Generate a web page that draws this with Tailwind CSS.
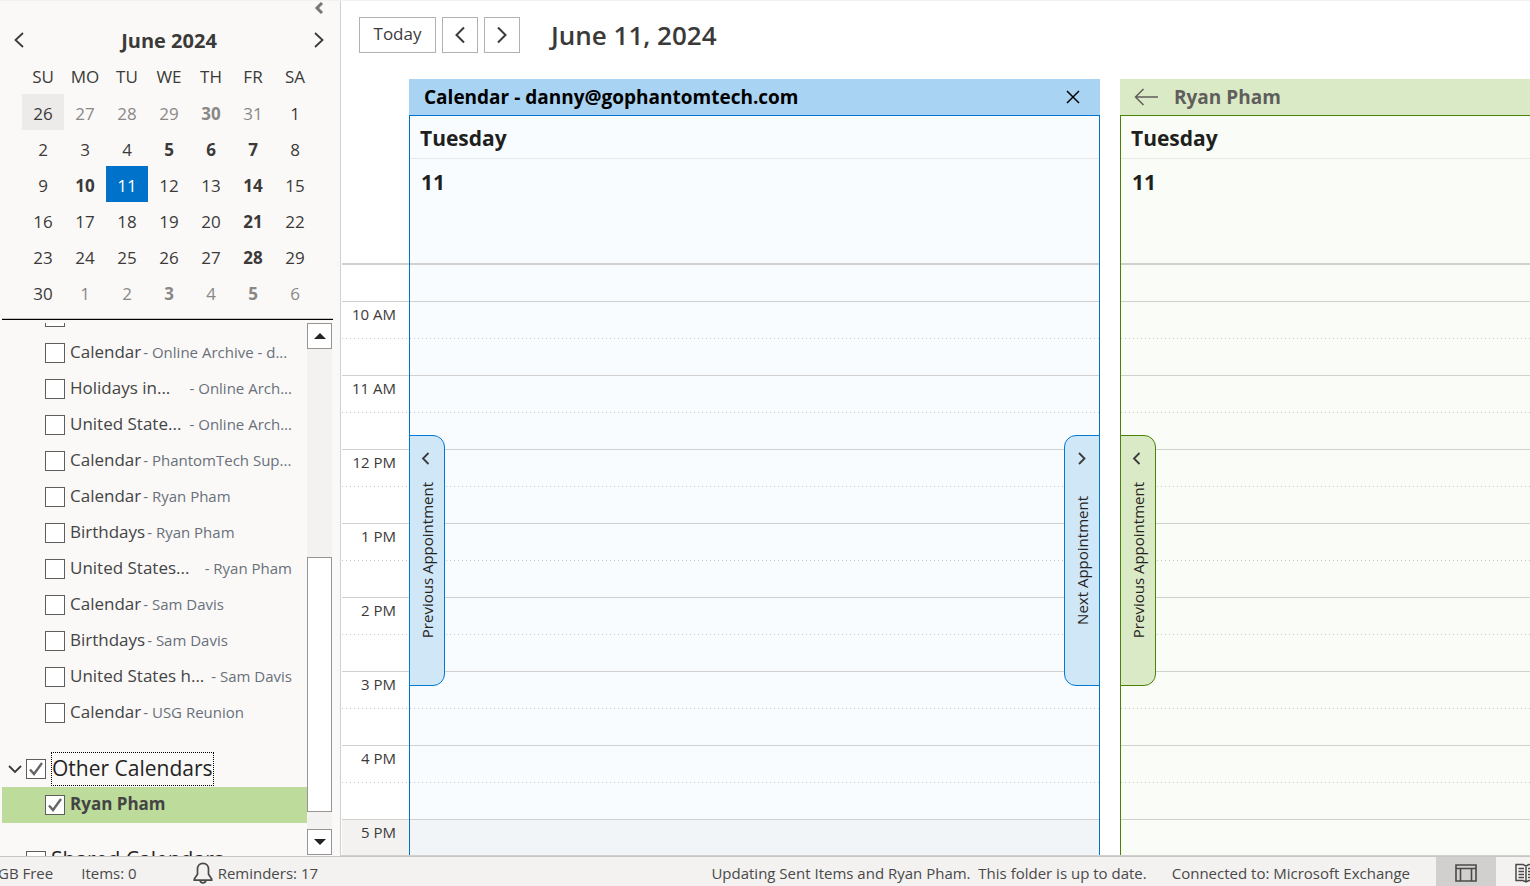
<!DOCTYPE html>
<html lang="en">
<head>
  <meta charset="UTF-8">
  <meta name="viewport" content="width=device-width, initial-scale=1.0">
  <title>Calendar - June 11, 2024</title>
  <script src="https://cdn.jsdelivr.net/npm/@tailwindcss/browser@4"></script>
  <style>
    body {
      font-family: 'Open Sans', 'Noto Sans', sans-serif;
    }
  </style>
</head>
<body class="flex flex-col h-screen overflow-hidden bg-white text-[#3b3a39]">
  <div class="flex-1 min-h-0 flex border-t border-[#f3f2f1]">

    <!-- Sidebar -->
    <aside class="w-[341px] shrink-0 flex flex-col bg-[#faf9f8] border-r border-[#d2d0ce]">
      <div class="flex justify-end h-[14px] pr-4">
        <button aria-label="Minimize folder pane" class="w-[10px]">
          <svg class="w-[10px] h-[12px]" viewBox="0 0 10 12" fill="none" stroke="#797775" stroke-width="3"><path d="M8 1 3 6l5 5"/></svg>
        </button>
      </div>

      <!-- Date navigator -->
      <div class="flex items-center justify-between h-[43px] pl-3 pr-[14px] pt-[6px]">
        <button aria-label="Previous month" class="p-px">
          <svg class="w-[12px] h-[18px]" viewBox="0 0 12 18" fill="none" stroke="#3b3a39" stroke-width="1.8"><path d="M10 2 2.500 9l7.500 7"/></svg>
        </button>
        <h2 class="text-[20px] leading-6 font-bold pt-[2px]">June 2024</h2>
        <button aria-label="Next month" class="p-px">
          <svg class="w-[12px] h-[18px]" viewBox="0 0 12 18" fill="none" stroke="#3b3a39" stroke-width="1.8"><path d="m2 2 7.500 7L2 16"/></svg>
        </button>
      </div>
      <table class="w-[294px] ml-[22px] table-fixed text-center text-[17px]">
        <thead>
          <tr class="h-9">
            <th class="font-normal p-0 pt-[2px]">SU</th>
            <th class="font-normal p-0 pt-[2px]">MO</th>
            <th class="font-normal p-0 pt-[2px]">TU</th>
            <th class="font-normal p-0 pt-[2px]">WE</th>
            <th class="font-normal p-0 pt-[2px]">TH</th>
            <th class="font-normal p-0 pt-[2px]">FR</th>
            <th class="font-normal p-0 pt-[2px]">SA</th>
          </tr>
        </thead>
        <tbody id="month-days"></tbody>
      </table>

      <!-- Calendar list -->
      <div class="mt-2 ml-[2px] mr-[7px] border-b border-black shadow-[inset_0_-1px_0_#c8c6c4] h-[2px]"></div>
      <div class="flex-1 min-h-0 flex mt-[3px] ml-[2px] mr-2">
        <div class="flex-1 min-w-0 overflow-hidden">
          <div id="calendar-list" class="-mt-[25px]"></div>
          <div class="flex items-center h-9 mt-[21px] pl-[5px]">
            <button aria-label="Collapse Other Calendars" class="w-[19px]">
              <svg class="w-4 h-4" viewBox="0 0 16 16" fill="none" stroke="#3b3a39" stroke-width="1.8"><path d="m2 5 6 6 6-6"/></svg>
            </button>
            <input type="checkbox" id="group-other" checked class="appearance-none size-5 bg-white border border-[#605e5c]">
            <svg class="size-5 -ml-5 pointer-events-none" viewBox="0 0 20 20" fill="none" stroke="#666" stroke-width="2.400"><path d="m4 10.500 4 4.500 8-11"/></svg>
            <label for="group-other" class="ml-[5px] h-[34px] leading-[30px] text-[21px] whitespace-nowrap text-[#252423] border border-dotted border-black">Other Calendars</label>
          </div>
          <div class="flex items-center h-9 pl-[43px] bg-[#bddb9a]">
            <input type="checkbox" id="cal-ryan" checked class="appearance-none size-5 bg-white border border-[#605e5c]">
            <svg class="size-5 -ml-5 pointer-events-none" viewBox="0 0 20 20" fill="none" stroke="#666" stroke-width="2.400"><path d="m4 10.500 4 4.500 8-11"/></svg>
            <label for="cal-ryan" class="ml-[5px] pb-[2px] text-[17px] font-bold text-[#444]">Ryan Pham</label>
          </div>
          <div class="flex items-center h-9 mt-5 pl-6">
            <input type="checkbox" id="group-shared" class="appearance-none size-5 bg-white border border-[#605e5c]">
            <label for="group-shared" class="ml-[5px] pb-[2px] text-[21px] whitespace-nowrap text-[#252423]">Shared Calendars</label>
          </div>
        </div>
        <!-- Scrollbar -->
        <div class="w-[25px] flex flex-col bg-[#f3f2f1] mb-px">
          <button aria-label="Scroll up" class="h-[26px] shrink-0 flex items-center justify-center bg-white border border-[#979593]">
            <svg class="w-3 h-[6px]" viewBox="0 0 12 6" fill="#252423"><path d="M0 6 6 0l6 6z"/></svg>
          </button>
          <div class="flex-[209]"></div>
          <div class="flex-[255] bg-white border border-[#979593]"></div>
          <div class="flex-[17]"></div>
          <button aria-label="Scroll down" class="h-[26px] shrink-0 flex items-center justify-center bg-white border border-[#979593]">
            <svg class="w-3 h-[6px]" viewBox="0 0 12 6" fill="#252423"><path d="m0 0 6 6 6-6z"/></svg>
          </button>
        </div>
      </div>
    </aside>

    <!-- Day view -->
    <main class="flex-1 min-w-0 flex flex-col pl-px border-b border-[#d2d0ce]">
      <div class="flex items-center gap-[6px] h-[68px] pl-[17px]">
        <button class="h-9 w-[77px] pb-[2px] border border-[#b3b0ad] text-[17px]">Today</button>
        <button aria-label="Previous day" class="size-9 flex items-center justify-center border border-[#b3b0ad]">
          <svg class="w-[12px] h-[18px]" viewBox="0 0 12 18" fill="none" stroke="#3b3a39" stroke-width="2"><path d="M10 1.500 2.500 9l7.500 7.500"/></svg>
        </button>
        <button aria-label="Next day" class="size-9 flex items-center justify-center border border-[#b3b0ad]">
          <svg class="w-[12px] h-[18px]" viewBox="0 0 12 18" fill="none" stroke="#3b3a39" stroke-width="2"><path d="m2 1.500 7.500 7.500L2 16.500"/></svg>
        </button>
        <h1 class="ml-[25px] text-[26px] leading-9 font-semibold">June 11, 2024</h1>
      </div>

      <div class="flex-1 min-h-0 flex mt-[10px]">
        <!-- Hours -->
        <div class="w-[67px] shrink-0 flex flex-col pt-[184px]">
          <div class="shrink-0 h-[38px] border-t-2 border-[#d2d0ce]"></div>
          <div id="hours" class="flex-1 min-h-0 overflow-hidden text-[15px] text-right"></div>
        </div>

        <div class="flex-1 min-w-0 grid grid-cols-[691fr_410fr] gap-5">
          <section class="min-w-0 min-h-0 flex flex-col">
            <header class="h-9 shrink-0 flex items-center justify-between pl-[15px] pr-5 bg-[#a9d3f2] text-black">
              <h2 class="text-[19px] font-bold">Calendar - danny@gophantomtech.com</h2>
              <button aria-label="Close calendar">
                <svg class="size-[14px]" viewBox="0 0 14 14" fill="none" stroke="#000" stroke-width="1.500"><path d="m1 1 12 12M13 1 1 13"/></svg>
              </button>
            </header>
            <div class="flex-1 min-h-0 flex flex-col border border-b-0 border-[#0072c9] bg-[#f8fcff]">
              <div class="h-[43px] shrink-0 pl-[10px] leading-[44px] text-[21px] font-bold text-[#201f1e] border-b border-[#e8e8e8]">Tuesday</div>
              <div class="h-[104px] shrink-0 pl-[11px] pt-[7px] leading-8 text-[21px] font-bold text-[#201f1e]">11</div>
              <div class="flex-1 min-h-0 relative flex flex-col border-t-2 border-[#d2d0ce]">
                <div class="h-9 shrink-0"></div>
                <div class="slots flex-1 min-h-0 overflow-hidden" data-off="bg-[#f1f5f7]"></div>
                <div class="absolute inset-y-0 -left-px flex items-center">
                  <button class="relative w-9 h-[251px] flex items-center justify-center rounded-r-xl border border-[#0078d4] bg-[#d0e7f8] text-[#252423] text-[15px]">
                    <svg class="absolute top-4 left-[11px] w-[9px] h-[13px]" viewBox="0 0 9 13" fill="none" stroke="#3b3a39" stroke-width="1.800"><path d="M7.500 1 2 6.500 7.500 12"/></svg>
                    <span class="[writing-mode:vertical-rl] rotate-180 whitespace-nowrap">Previous Appointment</span>
                  </button>
                </div>
                <div class="absolute inset-y-0 -right-px flex items-center">
                  <button class="relative w-9 h-[251px] flex items-center justify-center rounded-l-xl border border-[#0078d4] bg-[#d0e7f8] text-[#252423] text-[15px]">
                    <svg class="absolute top-4 left-3 w-[9px] h-[13px]" viewBox="0 0 9 13" fill="none" stroke="#3b3a39" stroke-width="1.800"><path d="M2 1l5.500 5.500L2 12"/></svg>
                    <span class="[writing-mode:vertical-rl] rotate-180 whitespace-nowrap">Next Appointment</span>
                  </button>
                </div>
              </div>
            </div>
          </section>

          <section class="min-w-0 min-h-0 flex flex-col">
            <header class="h-9 shrink-0 flex items-center gap-4 pl-[14px] bg-[#dbeac6] text-[#5f5e5c]">
              <button aria-label="Overlay calendar">
                <svg class="w-6 h-[18px]" viewBox="0 0 24 18" fill="none" stroke="#605e5c" stroke-width="1.500"><path d="M24 9H1.500M9.500 1 1.500 9l8 8"/></svg>
              </button>
              <h2 class="text-[19px] font-bold">Ryan Pham</h2>
            </header>
            <div class="flex-1 min-h-0 flex flex-col border-t border-l border-[#498205] bg-[#fafcf7]">
              <div class="h-[43px] shrink-0 pl-[10px] leading-[44px] text-[21px] font-bold text-[#201f1e] border-b border-[#e8e8e8]">Tuesday</div>
              <div class="h-[104px] shrink-0 pl-[11px] pt-[7px] leading-8 text-[21px] font-bold text-[#201f1e]">11</div>
              <div class="flex-1 min-h-0 relative flex flex-col border-t-2 border-[#d2d0ce]">
                <div class="h-9 shrink-0"></div>
                <div class="slots flex-1 min-h-0 overflow-hidden" data-off=""></div>
                <div class="absolute inset-y-0 -left-px flex items-center">
                  <button class="relative w-9 h-[251px] flex items-center justify-center rounded-r-xl border border-[#498205] bg-[#dbeac6] text-[#252423] text-[15px]">
                    <svg class="absolute top-4 left-[11px] w-[9px] h-[13px]" viewBox="0 0 9 13" fill="none" stroke="#3b3a39" stroke-width="1.800"><path d="M7.500 1 2 6.500 7.500 12"/></svg>
                    <span class="[writing-mode:vertical-rl] rotate-180 whitespace-nowrap">Previous Appointment</span>
                  </button>
                </div>
              </div>
            </div>
          </section>
        </div>
      </div>
    </main>
  </div>

  <!-- Status bar -->
  <footer class="h-[30px] shrink-0 flex items-center overflow-hidden whitespace-nowrap bg-[#f3f2f1] border-t border-[#c8c6c4] text-[15px] text-[#4a4948]">
    <span class="-ml-[2px] pt-1">GB Free</span>
    <span class="ml-7 pt-1">Items: 0</span>
    <button class="ml-14 flex items-center gap-[5px]">
      <svg class="w-5 h-[22px] mt-[3px]" viewBox="0 0 20 22" fill="none" stroke="#4a4948" stroke-width="1.700"><path d="M10 1.300c-3.600 0-5.500 2.600-5.500 5.800v5.200L1.300 17v1.200h17.400V17l-3.200-4.700V7.100c0-3.200-1.900-5.800-5.500-5.800zM7 18.500c.4 1.500 1.500 2.300 3 2.300s2.600-.8 3-2.300"/></svg>
      <span class="pt-1">Reminders: 17</span>
    </button>
    <span class="ml-auto pt-1">Updating Sent Items and Ryan Pham.&nbsp; This folder is up to date.</span>
    <span class="ml-[25px] pt-1">Connected to: Microsoft Exchange</span>
    <button aria-label="Normal view" class="ml-[26px] w-[60px] h-full flex items-center justify-center bg-[#d2d0ce]">
      <svg class="w-[22px] h-[18px] mt-[3px]" viewBox="0 0 22 18" fill="none" stroke="#4a4948" stroke-width="1.600"><path d="M1 1h20v16H1zM1 4.500h20M5.500 4.500V17M16.500 4.500V17"/></svg>
    </button>
    <button aria-label="Reading view" class="ml-[19px] w-[15px] overflow-hidden">
      <svg class="w-[22px] h-5 mt-[2px]" viewBox="0 0 22 20" fill="none" stroke="#4a4948" stroke-width="1.500"><path d="M1 1.500h7L11 3l3-1.500h7v16h-7L11 19l-3-1.500H1zM11 3v16M3.500 5.500H9M3.500 8.500H9M3.500 11.500H9M3.500 14.500H9M13 5.500h5.500M13 8.500h5.500M13 11.500h5.500M13 14.500h5.500"/></svg>
    </button>
  </footer>

  <script>
    // Month grid, starting on Sunday May 26
    const bold = [4, 10, 11, 12, 15, 19, 26, 33, 38, 40];
    let rows = '';
    for (let week = 0; week < 6; week++) {
      rows += '<tr class="h-9">';
      for (let day = 0; day < 7; day++) {
        const index = week * 7 + day;
        const date = new Date(2024, 4, 26 + index);
        let style = date.getMonth() === 5 ? 'text-[#3b3a39]' : 'text-[#8a8886]';
        if (index === 0) style = 'bg-[#edebe9] text-[#3b3a39]';
        if (index === 16) style = 'bg-[#0072c9] text-white';
        if (bold.includes(index)) style += ' font-bold';
        rows += `<td class="p-0 pt-[3px] ${style}">${date.getDate()}</td>`;
      }
      rows += '</tr>';
    }
    document.getElementById('month-days').innerHTML = rows;

    // Calendars, [name, mailbox]
    const calendars = [
      ['', ''],
      ['Calendar', 'Online Archive - d...'],
      ['Holidays in...', 'Online Arch...'],
      ['United State...', 'Online Arch...'],
      ['Calendar', 'PhantomTech Sup...'],
      ['Calendar', 'Ryan Pham'],
      ['Birthdays', 'Ryan Pham'],
      ['United States...', 'Ryan Pham'],
      ['Calendar', 'Sam Davis'],
      ['Birthdays', 'Sam Davis'],
      ['United States h...', 'Sam Davis'],
      ['Calendar', 'USG Reunion']
    ];
    document.getElementById('calendar-list').innerHTML = calendars.map(([name, owner], i) => `
      <div class="flex items-center h-9 pl-[43px] pr-[15px]">
        <input type="checkbox" id="cal-${i}" class="appearance-none shrink-0 size-5 mt-px bg-white border border-[#605e5c]">
        <label for="cal-${i}" class="flex-1 flex items-baseline gap-[2px] ml-[5px] pb-px whitespace-nowrap text-[17px] text-[#444] ${name.endsWith('...') ? 'justify-between' : ''}">
          <span>${name}</span>
          <span class="text-[15px] text-[#69707a]">${owner ? '- ' + owner : ''}</span>
        </label>
      </div>
    `).join('');

    // Hour labels and the slots beside them
    const hours = ['10 AM', '11 AM', '12 PM', '1 PM', '2 PM', '3 PM', '4 PM', '5 PM'];
    const halfHour = '<div class="h-px bg-[repeating-linear-gradient(90deg,#c8c6c4_0_1px,transparent_1px_4px)]"></div>';
    document.getElementById('hours').innerHTML = hours.map(hour => `
      <div class="h-[74px] border-t border-[#d2d0ce] ${hour === '5 PM' ? 'bg-[#f3f2f1]' : ''}">
        <div class="h-9 pr-[13px] leading-6">${hour}</div>
        ${halfHour}
      </div>
    `).join('');
    document.querySelectorAll('.slots').forEach(slots => {
      slots.innerHTML = hours.map(hour => `
        <div class="h-[74px] border-t border-[#d2d0ce] ${hour === '5 PM' ? slots.dataset.off : ''}">
          <div class="h-9"></div>
          ${halfHour}
        </div>
      `).join('');
    });
  </script>
</body>
</html>
